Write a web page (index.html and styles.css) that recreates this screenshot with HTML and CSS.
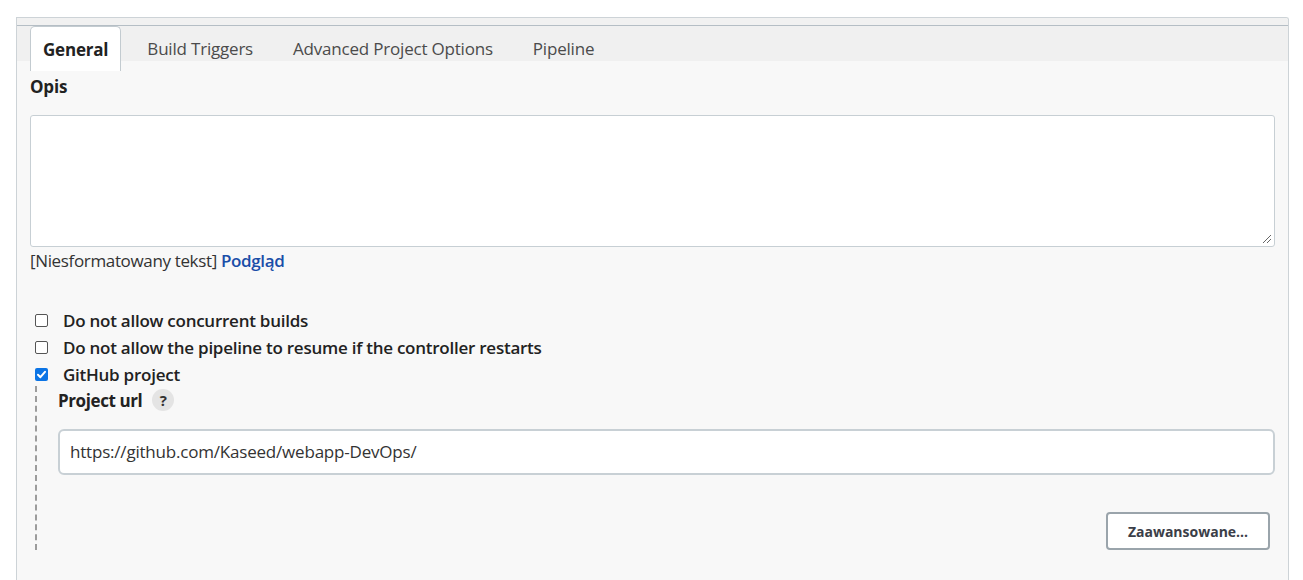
FILE: index.html
```html
<!DOCTYPE html>
<html>
<head>
<meta charset="utf-8">
<link rel="stylesheet" href="styles.css">
</head>
<body>
<div class="panel">
  <div class="topband"></div>
  <div class="tabbar">
    <div class="tab active">General</div>
    <div class="tab">Build Triggers</div>
    <div class="tab">Advanced Project Options</div>
    <div class="tab">Pipeline</div>
  </div>
  <div class="content">
    <div class="label opis">Opis</div>
    <div class="textarea"><span class="grip"></span></div>
    <div class="preview">[Niesformatowany tekst] <a class="podglad">Podgląd</a></div>
    <div class="checks">
      <div class="check"><span class="box"></span><span class="ctext">Do not allow concurrent builds</span></div>
      <div class="check"><span class="box"></span><span class="ctext">Do not allow the pipeline to resume if the controller restarts</span></div>
      <div class="check"><span class="box checked"><svg width="13" height="13" viewBox="0 0 13 13"><path d="M3 6.8 L5.4 9.2 L10 3.8" fill="none" stroke="#fff" stroke-width="2" stroke-linecap="round" stroke-linejoin="round"/></svg></span><span class="ctext">GitHub project</span></div>
    </div>
    <div class="nested">
      <div class="urlrow">
        <span class="label">Project url</span>
        <span class="help">?</span>
      </div>
      <div class="input">https://github.com/Kaseed/webapp-DevOps/</div>
      <div class="btnrow"><button class="btn">Zaawansowane...</button></div>
    </div>
  </div>
</div>
</body>
</html>
```
FILE: styles.css
```css
html, body {
  margin: 0;
  padding: 0;
  background: #fff;
  font-family: "Open Sans", "Noto Sans", sans-serif;
  color: #222;
}
.panel {
  margin: 17px 0 0 16px;
  width: 1271px;
  height: 563px;
  overflow: hidden;
  border: 1px solid #cdd3d7;
  border-bottom: none;
  border-radius: 0 3px 0 0;
  background: #f8f8f8;
}
.topband {
  height: 7px;
  background: #f1f1f1;
  border-bottom: 1px solid #b5bec5;
}
.tabbar {
  height: 35px;
  background: #f0f0f0;
  display: flex;
  padding-left: 13px;
  align-items: flex-start;
}
.tab {
  font-size: 17px;
  color: #4b4b4b;
  padding: 0 13px;
  height: 44px;
  line-height: 46px;
  margin-right: 14px;
  letter-spacing: -0.2px;
}
.tab.active {
  background: #fff;
  border: 1px solid #c3cbd0;
  border-bottom: none;
  border-radius: 5px 5px 0 0;
  font-weight: 700;
  color: #222;
  padding: 0 12px;
  margin-right: 13px;
  position: relative;
  z-index: 1;
}
.content {
  padding: 0 13px 0 13px;
}
.label {
  font-weight: 700;
  font-size: 17px;
  color: #222;
  letter-spacing: -0.2px;
}
.opis {
  margin-top: 15px;
  line-height: 22px;
}
.textarea {
  margin-top: 17px;
  height: 130px;
  background: #fff;
  border: 1px solid #c7cfd4;
  border-radius: 3px;
  position: relative;
}
.grip {
  position: absolute;
  right: 3px;
  bottom: 3px;
  width: 8px;
  height: 8px;
  background: linear-gradient(135deg, transparent 45%, #666 45%, #666 55%, transparent 55%, transparent 70%, #666 70%, #666 80%, transparent 80%);
}
.preview {
  margin-top: 3px;
  font-size: 17px;
  color: #333;
  line-height: 22px;
  letter-spacing: -0.35px;
}
.podglad {
  color: #1a4ea8;
  font-weight: 600;
}
.checks {
  margin-top: 37px;
  display: flex;
  flex-direction: column;
  gap: 4px;
}
.check {
  display: flex;
  align-items: center;
  height: 23px;
  padding-left: 5px;
}
.box {
  width: 11px;
  height: 11px;
  border: 1px solid #555;
  border-radius: 2px;
  background: #fff;
  margin-right: 15px;
  flex: none;
}
.box.checked {
  width: 13px;
  height: 13px;
  border: none;
  background: #0b74e5;
  display: flex;
}
.ctext {
  font-size: 17px;
  font-weight: 600;
  color: #222;
  letter-spacing: -0.25px;
}
.nested {
  margin-left: 5px;
  border-left: 2px dashed #9c9c9c;
  padding-left: 21px;
  padding-bottom: 0;
  margin-top: 0;
}
.urlrow {
  display: flex;
  align-items: center;
  height: 28px;
}
.urlrow .label {
  letter-spacing: -0.4px;
}
.help {
  margin-left: 10px;
  width: 22px;
  height: 22px;
  border-radius: 50%;
  background: #e4e4e4;
  font-size: 15px;
  font-weight: 700;
  color: #333;
  display: flex;
  align-items: center;
  justify-content: center;
}
.input {
  margin-top: 15px;
  height: 42px;
  background: #fff;
  border: 2px solid #c8d0d5;
  border-radius: 6px;
  font-size: 17px;
  color: #333;
  line-height: 42px;
  padding-left: 10px;
  letter-spacing: -0.2px;
}
.btnrow {
  display: flex;
  justify-content: flex-end;
  margin-top: 37px;
  padding-right: 5px;
}
.btn {
  width: 164px;
  height: 38px;
  background: #fff;
  border: 2px solid #9aa4ab;
  border-radius: 4px;
  font-family: "Open Sans", sans-serif;
  font-weight: 700;
  font-size: 14px;
  color: #3b3e48;
}
```
